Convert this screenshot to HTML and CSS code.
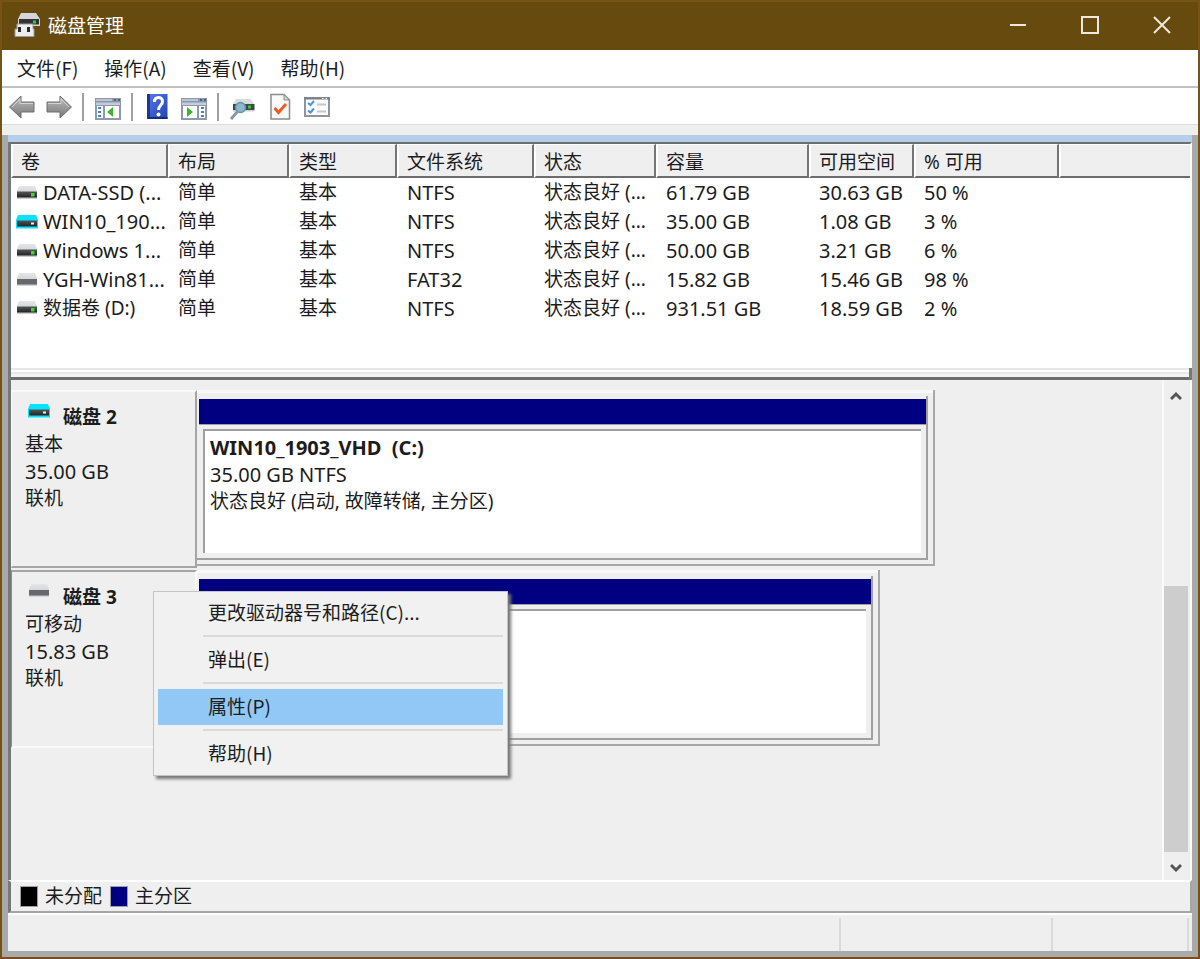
FILE: index.html
```html
<!DOCTYPE html>
<html lang="zh-CN">
<head>
<meta charset="utf-8">
<meta name="viewport" content="width=device-width, initial-scale=1">
<title>磁盘管理</title>
<link rel="stylesheet" href="styles.css">
</head>
<body>
<svg class="defs" width="0" height="0" aria-hidden="true">
  <defs>
    <linearGradient id="metal" x1="0" y1="0" x2="0" y2="1"><stop offset="0" stop-color="#e4e6e9"/><stop offset="1" stop-color="#c3c5c9"/></linearGradient>
    <linearGradient id="dark" x1="0" y1="0" x2="0" y2="1"><stop offset="0" stop-color="#565656"/><stop offset="1" stop-color="#222"/></linearGradient>
    <linearGradient id="arrow" x1="0" y1="0" x2="0" y2="1"><stop offset="0" stop-color="#bdbdbd"/><stop offset="1" stop-color="#787878"/></linearGradient>
    <linearGradient id="book" x1="0" y1="0" x2="1" y2="1"><stop offset="0" stop-color="#5578ea"/><stop offset="1" stop-color="#2142b4"/></linearGradient>
    <symbol id="drive" viewBox="0 0 22 14">
      <path d="M3 0H19L21 5V13H1V5Z" fill="url(#metal)"/>
      <path d="M1 5.500H21V11.500H1Z" fill="url(#dark)"/>
      <path d="M1 12H21V13H1Z" fill="#cdcdcd"/>
      <path d="M15 7H18.500V10.500H15Z" fill="#2fe02f"/>
    </symbol>
    <symbol id="drive-vhd" viewBox="0 0 22 14">
      <path d="M2 0H20L22 5V13.500H0V5Z" fill="#06e3fb"/>
      <path d="M1 5.500H21V11.500H1Z" fill="url(#dark)"/>
      <path d="M15 7.500H18V9.500H15Z" fill="#eee"/>
    </symbol>
    <symbol id="drive-usb" viewBox="0 0 22 14">
      <path d="M3 0H19L21 5V13H1V5Z" fill="url(#metal)"/>
      <path d="M1 6H21V11.500H1Z" fill="#66686a"/>
      <path d="M1 12H21V13H1Z" fill="#d4d4d4"/>
    </symbol>
  </defs>
</svg>
<div class="window">
  <header class="titlebar">
    <svg class="app-icon" viewBox="0 0 26 26" aria-hidden="true">
      <path d="M7 1H22L26 7V14H4V7Z" fill="#d5d6d8"/>
      <path d="M5 7H25V12.500H5Z" fill="#333"/>
      <path d="M19 8.500H22V11.500H19Z" fill="#28d535"/>
      <path d="M3 12H19V17H20V24.500H1V17H3Z" fill="#eceef2" stroke="#9a9a9c"/>
      <path d="M4 15H7V20H4ZM13 15H16V20H13Z" fill="#292929"/>
    </svg>
    <h1 class="title">磁盘管理</h1>
    <button class="window-button" aria-label="最小化"><svg viewBox="0 0 18 18"><path d="M1 9H17"/></svg></button>
    <button class="window-button" aria-label="最大化"><svg viewBox="0 0 18 18"><path d="M1 1H17V17H1Z"/></svg></button>
    <button class="window-button" aria-label="关闭"><svg viewBox="0 0 18 18"><path d="M1 1L17 17M17 1L1 17"/></svg></button>
  </header>
  <nav class="menubar">
    <button class="menu-title">文件(F)</button>
    <button class="menu-title">操作(A)</button>
    <button class="menu-title">查看(V)</button>
    <button class="menu-title">帮助(H)</button>
  </nav>
  <div class="toolbar" role="toolbar" aria-label="工具">
    <button class="tool" aria-label="后退"><svg viewBox="0 0 28 28"><path d="M1.500 14L13 3V9H26V19H13V25Z" fill="url(#arrow)" stroke="#6c6c6c" stroke-linejoin="round"/><path d="M4 14L12 6V10.500H25" fill="none" stroke="#d2d2d2"/></svg></button>
    <button class="tool" aria-label="前进"><svg viewBox="0 0 28 28"><path d="M26.500 14L15 3V9H2V19H15V25Z" fill="url(#arrow)" stroke="#6c6c6c" stroke-linejoin="round"/><path d="M3 10.500H16V6L24 14" fill="none" stroke="#d2d2d2"/></svg></button>
    <span class="tool-divider"></span>
    <button class="tool" aria-label="显示控制台树"><svg viewBox="0 0 28 28">
      <path d="M1 5H27V27H1Z" fill="#8d98a8"/><path d="M2 6H18V8H2Z" fill="#b9c5d6"/><path d="M20 6H22V8H20ZM24 6H26V8H24Z" fill="#4f607c"/><path d="M2 9.500H26V12H2Z" fill="#c3cddb"/>
      <path d="M3 13H9V25H3ZM11 13H25V25H11Z" fill="#fff"/><path d="M4 15H7M4 19H7M4 23H7" stroke="#3d86cf" stroke-width="2"/><path d="M19 14V24L13 19Z" fill="#3fb52b"/></svg></button>
    <span class="tool-divider"></span>
    <button class="tool" aria-label="帮助"><svg viewBox="0 0 28 28">
      <path d="M4 1H24.500V26H4Z" fill="url(#book)"/><path d="M4 1H7V26H4Z" fill="#1c3795"/><path d="M5 25H24.500" stroke="#152d80" stroke-width="2"/>
      <path d="M11.500 9C11 3 19.500 3 19.500 8.500C19.500 12.500 15.500 12 15.500 17" fill="none" stroke="#fff" stroke-width="3"/><circle cx="15.500" cy="21.500" r="2" fill="#fff"/></svg></button>
    <button class="tool" aria-label="显示操作窗格"><svg viewBox="0 0 28 28">
      <path d="M1 5H27V27H1Z" fill="#8d98a8"/><path d="M2 6H18V8H2Z" fill="#b9c5d6"/><path d="M20 6H22V8H20ZM24 6H26V8H24Z" fill="#4f607c"/><path d="M2 9.500H26V12H2Z" fill="#c3cddb"/>
      <path d="M3 13H17V25H3ZM19 13H25V25H19Z" fill="#fff"/><path d="M21 15H24M21 19H24M21 23H24" stroke="#3d86cf" stroke-width="2"/><path d="M7 14V24L13 19Z" fill="#3fb52b"/></svg></button>
    <span class="tool-divider"></span>
    <button class="tool" aria-label="重新扫描磁盘"><svg viewBox="0 0 28 28">
      <path d="M7 6H22L25 11H4Z" fill="#dadbdc"/><path d="M4 11H25.500V17H4Z" fill="#444"/><path d="M4 17H25.500V18.500H4Z" fill="#cfcfcf"/><path d="M19 12.500H22V15.500H19Z" fill="#22d62b"/>
      <circle cx="11.500" cy="14.500" r="5" fill="#8eb6cd" stroke="#5d93b4" stroke-width="1.500"/><path d="M9 18L2 26" stroke="#8399a8" stroke-width="3"/></svg></button>
    <button class="tool" aria-label="属性"><svg viewBox="0 0 28 28">
      <path d="M5 1.500H18L23.500 7V26H5Z" fill="#fafafa" stroke="#8b8b8b" stroke-width="1.500"/><path d="M18 1.500V7H23.500Z" fill="#d5d5d5" stroke="#8b8b8b"/>
      <path d="M8.500 15L12.500 19.500L20 11" fill="none" stroke="#f05a22" stroke-width="3"/></svg></button>
    <button class="tool" aria-label="选项"><svg viewBox="0 0 28 28">
      <path d="M2 5H26V23H2Z" fill="#fbfbfb" stroke="#8e959b" stroke-width="2"/><path d="M1 5.500H27" stroke="#777f86" stroke-width="2"/><path d="M19 5.500H20.500M22.500 5.500H24" stroke="#fff"/>
      <path d="M5 10L7.500 12L11 8M5 17.500L7.500 19.500L11 15.500" fill="none" stroke="#4595e0" stroke-width="2"/><path d="M14 11.500H23M14 18.500H23" stroke="#c7c7c7" stroke-width="2"/></svg></button>
  </div>
  <main class="frame">
    <div class="workspace">
      <section class="volume-list">
        <table class="volumes">
          <colgroup><col class="c-name"><col class="c-layout"><col class="c-type"><col class="c-fs"><col class="c-status"><col class="c-size"><col class="c-free"><col class="c-percent"><col></colgroup>
          <thead><tr><th>卷</th><th>布局</th><th>类型</th><th>文件系统</th><th>状态</th><th>容量</th><th>可用空间</th><th>% 可用</th><th></th></tr></thead>
          <tbody>
            <tr><td class="name latin"><svg class="drive"><use href="#drive"/></svg>DATA-SSD (...</td><td>简单</td><td>基本</td><td class="latin">NTFS</td><td>状态良好 (...</td><td class="latin">61.79 GB</td><td class="latin">30.63 GB</td><td class="latin">50 %</td><td></td></tr>
            <tr><td class="name latin"><svg class="drive"><use href="#drive-vhd"/></svg>WIN10_190...</td><td>简单</td><td>基本</td><td class="latin">NTFS</td><td>状态良好 (...</td><td class="latin">35.00 GB</td><td class="latin">1.08 GB</td><td class="latin">3 %</td><td></td></tr>
            <tr><td class="name latin"><svg class="drive"><use href="#drive"/></svg>Windows 1...</td><td>简单</td><td>基本</td><td class="latin">NTFS</td><td>状态良好 (...</td><td class="latin">50.00 GB</td><td class="latin">3.21 GB</td><td class="latin">6 %</td><td></td></tr>
            <tr><td class="name latin"><svg class="drive"><use href="#drive-usb"/></svg>YGH-Win81...</td><td>简单</td><td>基本</td><td class="latin">FAT32</td><td>状态良好 (...</td><td class="latin">15.82 GB</td><td class="latin">15.46 GB</td><td class="latin">98 %</td><td></td></tr>
            <tr><td class="name"><svg class="drive"><use href="#drive"/></svg>数据卷 (D:)</td><td>简单</td><td>基本</td><td class="latin">NTFS</td><td>状态良好 (...</td><td class="latin">931.51 GB</td><td class="latin">18.59 GB</td><td class="latin">2 %</td><td></td></tr>
          </tbody>
        </table>
      </section>
      <div class="splitter"></div>
      <section class="disk-pane">
        <div class="disks">
          <article class="disk">
            <div class="disk-label">
              <h2 class="disk-name"><svg class="drive"><use href="#drive-vhd"/></svg>磁盘 2</h2>
              <p>基本</p><p class="latin">35.00 GB</p><p>联机</p>
            </div>
            <div class="disk-map">
              <div class="disk-extent extent-vhd">
                <div class="partition">
                  <div class="partition-bar"></div>
                  <div class="partition-body">
                    <h3 class="partition-name latin">WIN10_1903_VHD&nbsp; (C:)</h3>
                    <p class="latin">35.00 GB NTFS</p>
                    <p>状态良好 (启动, 故障转储, 主分区)</p>
                  </div>
                </div>
              </div>
            </div>
          </article>
          <article class="disk selected">
            <div class="disk-label">
              <h2 class="disk-name"><svg class="drive"><use href="#drive-usb"/></svg>磁盘 3</h2>
              <p>可移动</p><p class="latin">15.83 GB</p><p>联机</p>
            </div>
            <div class="disk-map">
              <div class="disk-extent extent-usb">
                <div class="partition">
                  <div class="partition-bar"></div>
                  <div class="partition-body"></div>
                </div>
              </div>
            </div>
          </article>
          <div class="context-menu" role="menu">
            <button class="menu-item" role="menuitem">更改驱动器号和路径(C)...</button>
            <hr class="menu-line">
            <button class="menu-item" role="menuitem">弹出(E)</button>
            <hr class="menu-line">
            <button class="menu-item active" role="menuitem">属性(P)</button>
            <hr class="menu-line">
            <button class="menu-item" role="menuitem">帮助(H)</button>
          </div>
        </div>
        <div class="scrollbar">
          <button class="scroll-button" aria-label="向上滚动"><svg viewBox="0 0 12 10"><path d="M1 8L6 3L11 8"/></svg></button>
          <div class="scroll-track"><div class="scroll-thumb"></div></div>
          <button class="scroll-button" aria-label="向下滚动"><svg viewBox="0 0 12 10"><path d="M1 2L6 7L11 2"/></svg></button>
        </div>
      </section>
      <ul class="legend">
        <li class="legend-item"><span class="swatch unallocated"></span>未分配</li>
        <li class="legend-item"><span class="swatch primary"></span>主分区</li>
      </ul>
    </div>
    <footer class="statusbar"><span class="status-main"></span><span class="status-wide"></span><span class="status-end"></span></footer>
  </main>
</div>
</body>
</html>
```
FILE: styles.css
```css
* {
  box-sizing: border-box;
}

body {
  margin: 0;
  background: #efefef;
  color: #1c1c1c;
  font: 19px/27px "Noto Sans", "Noto Sans CJK SC", sans-serif;
}

h1, h2, h3, p, ul, hr {
  margin: 0;
  padding: 0;
  font-size: inherit;
}

button {
  margin: 0;
  padding: 0;
  border: 0;
  background: none;
  color: inherit;
  font: 19px/27px "Noto Sans CJK SC", sans-serif;
}

.defs {
  position: absolute;
}

.latin {
  font-size: 20px;
}

.window {
  display: flex;
  flex-direction: column;
  min-height: 100vh;
  border: 2px solid #745315;
}

.titlebar {
  display: flex;
  align-items: center;
  height: 48px;
  padding: 0 0 3px 12px;
  background: #674a0d;
  color: #fff;
}

.app-icon {
  width: 26px;
  height: 26px;
}

.title {
  flex: 1;
  padding-left: 8px;
  font-family: "Noto Sans CJK SC", sans-serif;
  font-weight: 400;
}

.window-button {
  display: flex;
  align-items: center;
  justify-content: center;
  width: 72px;
  height: 100%;
}

.window-button svg {
  width: 18px;
  height: 18px;
  fill: none;
  stroke: #eee9df;
  stroke-width: 2;
}

.menubar {
  display: flex;
  height: 38px;
  padding: 0 0 2px 2px;
  border-bottom: 2px solid #c1c1c3;
  background: #fff;
}

.menu-title {
  padding: 0 13px;
}

.toolbar {
  display: flex;
  align-items: center;
  height: 37px;
  padding: 2px 1px 0;
  border-bottom: 1px solid #dedede;
  background: #fff;
}

.tool {
  display: flex;
  align-items: center;
  justify-content: center;
  width: 37px;
  height: 32px;
}

.tool svg {
  width: 28px;
  height: 28px;
}

.tool-divider {
  width: 2px;
  height: 28px;
  margin: 0 5px;
  background: #a0a0a0;
}

.frame {
  display: flex;
  flex: 1;
  flex-direction: column;
  margin-top: 10px;
  padding: 0 6px 6px;
  background: #a9a9a9;
}

.workspace {
  display: flex;
  flex: 1;
  flex-direction: column;
  border-top: 7px solid #b3cfe9;
  background: #efefef;
}

.volume-list {
  min-height: 226px;
  border-top: 2px solid #6d6d6d;
  border-right: 2px solid #fff;
  border-left: 3px solid #777;
  background: #fff;
}

.volumes {
  width: 100%;
  table-layout: fixed;
  border-collapse: separate;
  border-spacing: 0;
}

.c-name { width: 157px; }
.c-layout { width: 121px; }
.c-type { width: 108px; }
.c-fs { width: 137px; }
.c-status { width: 122px; }
.c-size { width: 153px; }
.c-free { width: 105px; }
.c-percent { width: 145px; }

.volumes th {
  height: 34px;
  padding: 3px 0 0 8px;
  border-top: 1px solid #fff;
  border-right: 2px solid #757575;
  border-bottom: 2px solid #6d6d6d;
  border-left: 2px solid #fff;
  background: #efefef;
  font-weight: 400;
  text-align: left;
  white-space: nowrap;
}

.volumes th:last-child {
  border-right: 0;
}

.volumes td {
  height: 29px;
  padding: 0 0 0 10px;
  white-space: nowrap;
}

.volumes .name {
  padding-left: 5px;
}

.drive {
  width: 22px;
  height: 14px;
}

.name .drive {
  margin-right: 5px;
}

.splitter {
  height: 12px;
  border-right: 3px solid #777;
  border-left: 3px solid #777;
  background: linear-gradient(#e8e8e8 2px, #fff 2px 4px, #e8e8e8 4px 6px, #f4f4f4 6px 9px, #6d6d6d 9px);
}

.disk-pane {
  display: flex;
  flex: 1;
  border-right: 2px solid #fff;
  border-left: 3px solid #777;
}

.disks {
  position: relative;
  display: flex;
  flex: 1;
  flex-direction: column;
  gap: 2px;
  padding: 10px 0 131px;
  border-right: 2px solid #fafafa;
}

.disk {
  display: flex;
  height: 178px;
}

.disk-label {
  width: 186px;
  padding: 12px 0 0 13px;
  border: 2px solid #fafafa;
  border-right-color: #a5a5a5;
  border-bottom-color: #a5a5a5;
  border-left-width: 1px;
}

.selected .disk-label {
  border-color: #a5a5a5 #fafafa #fafafa #8c8c8c;
}

.disk-name {
  display: flex;
  gap: 13px;
  padding-left: 3px;
}

.disk-map {
  flex: 1;
  padding-bottom: 2px;
}

.disk-extent {
  height: 100%;
  padding: 6px 5px 4px 0;
  border: solid #a8a8a8;
  border-width: 0 2px 2px 0;
  box-shadow: inset 0 3px #f8f8f8;
}

.extent-vhd {
  width: 76.5%;
}

.extent-usb {
  width: 70.8%;
}

.partition {
  display: flex;
  flex-direction: column;
  height: 100%;
  padding: 3px 0 0 2px;
  border: solid #a0a0a0;
  border-width: 0 2px 2px 0;
}

.partition-bar {
  height: 26px;
  border-bottom: 1px solid #a0a0a0;
  background: #000080;
}

.partition-body {
  flex: 1;
  margin: 4px 5px 5px 4px;
  padding: 3px 5px;
  border: solid #a0a0a0;
  border-width: 2px 0 0 2px;
  background: #fff;
}

.context-menu {
  position: absolute;
  top: 211px;
  left: 142px;
  width: 355px;
  padding: 3px 4px;
  border: 1px solid #c4c4c4;
  background: #f1f1f1;
  box-shadow: 3px 3px 3px #777;
}

.menu-item {
  display: block;
  width: 100%;
  height: 36px;
  padding: 0 0 3px 50px;
  text-align: left;
}

.menu-item.active {
  background: #91c8f6;
}

.menu-line {
  height: 2px;
  margin: 4px 0 5px 45px;
  border: 0;
  background: #dadada;
}

.scrollbar {
  display: flex;
  flex-direction: column;
  width: 26px;
  padding-right: 2px;
}

.scroll-button {
  height: 28px;
  line-height: 10px;
}

.scroll-button svg {
  width: 12px;
  height: 10px;
  fill: none;
  stroke: #555;
  stroke-width: 3;
}

.scroll-track {
  display: flex;
  flex: 1;
  flex-direction: column;
  justify-content: flex-end;
}

.scroll-thumb {
  height: 60%;
  background: #cdcdcd;
}

.legend {
  display: flex;
  gap: 8px;
  height: 33px;
  padding-left: 9px;
  border: solid #a5a5a5;
  border-width: 2px;
  border-top-color: #fff;
  border-left: 3px solid #777;
  list-style: none;
}

.legend-item {
  display: flex;
  align-items: center;
  gap: 7px;
}

.swatch {
  width: 18px;
  height: 21px;
  border: 1px solid #a0a0a0;
}

.unallocated {
  background: #000;
}

.primary {
  background: #000080;
}

.statusbar {
  display: flex;
  height: 38px;
  padding-top: 3px;
  border-top: 2px solid #fff;
  background: #efefef;
}

.statusbar span {
  border-right: 2px solid #dadada;
}

.status-main {
  flex: 1;
}

.status-wide {
  width: 212px;
}

.status-end {
  width: 136px;
  margin-right: 3px;
}
```
